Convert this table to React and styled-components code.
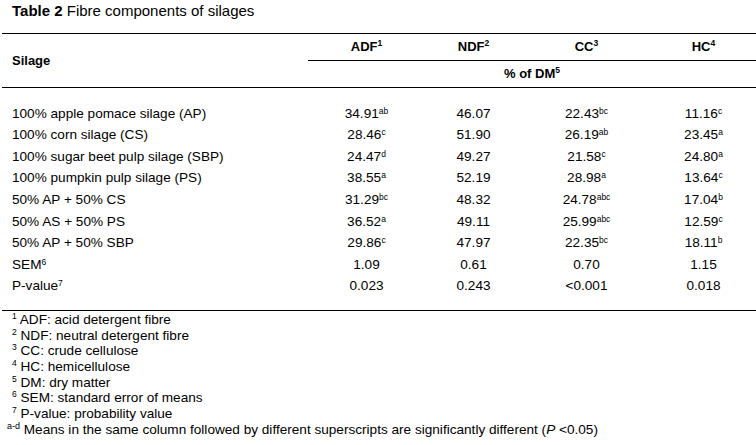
import React from "react";
import styled, { createGlobalStyle } from "styled-components";

const Global = createGlobalStyle`
  html, body { margin: 0; padding: 0; background: #fff; }
  body { font-family: "Liberation Sans", Arial, sans-serif; color: #000; }
`;

const COLS = "306px 117px 97px 129px 105px";

const Page = styled.div`
  width: 756px;
  height: 445px;
  overflow: hidden;
  background: #fff;
`;

const Title = styled.div`
  margin: 2px 0 0 0;
  padding-left: 12px;
  font-size: 15px;
  line-height: 17px;
  white-space: nowrap;
`;

const TableBox = styled.div`
  margin: 14px 0 0 2px;
  width: 754px;
  font-size: 13.6px;
`;

const Head = styled.div`
  display: grid;
  grid-template-columns: ${COLS};
  grid-template-rows: 28px 27px;
  font-weight: bold;
  font-size: 13px;
`;

const SilageHead = styled.div`
  grid-row: 1 / span 2;
  grid-column: 1;
  box-sizing: border-box;
  border-top: 1px solid #000;
  border-bottom: 1px solid #000;
  display: flex;
  align-items: center;
  padding-left: 10px;
`;

const ColHead = styled.div`
  box-sizing: border-box;
  border-top: 1px solid #000;
  border-bottom: 1px solid #000;
  display: flex;
  align-items: center;
  justify-content: center;
  white-space: nowrap;
`;

const UnitHead = styled.div`
  grid-column: 2 / span 4;
  box-sizing: border-box;
  border-bottom: 1px solid #000;
  display: flex;
  align-items: center;
  justify-content: center;
  white-space: nowrap;
`;

const HeadText = styled.span`
  display: inline-block;
  line-height: 16px;
`;

const Body = styled.div`
  padding: 14.6px 0 13px 0;
  border-bottom: 1px solid #000;
`;

const Row = styled.div`
  display: grid;
  grid-template-columns: ${COLS};
  height: 21.6px;
  line-height: 21.6px;
  align-items: center;
  white-space: nowrap;
`;

const Label = styled.div`
  padding-left: 10px;
`;

const Value = styled.div`
  text-align: center;
`;

const Sup = styled.span`
  font-size: ${(p) => p.$size || 8.5}px;
  line-height: 0;
  vertical-align: ${(p) => p.$raise || 4.5}px;
  font-weight: normal;
`;

const HeadSup = styled(Sup)`
  font-weight: bold;
`;

const Notes = styled.div`
  padding-top: 1px;
  font-size: 13.6px;
  line-height: 15.7px;
`;

const Note = styled.div`
  padding-left: ${(p) => (p.$indent != null ? p.$indent : 12)}px;
  white-space: nowrap;
`;

const rows = [
  ["100% apple pomace silage (AP)", null, ["34.91", "ab"], ["46.07"], ["22.43", "bc"], ["11.16", "c"]],
  ["100% corn silage (CS)", null, ["28.46", "c"], ["51.90"], ["26.19", "ab"], ["23.45", "a"]],
  ["100% sugar beet pulp silage (SBP)", null, ["24.47", "d"], ["49.27"], ["21.58", "c"], ["24.80", "a"]],
  ["100% pumpkin pulp silage (PS)", null, ["38.55", "a"], ["52.19"], ["28.98", "a"], ["13.64", "c"]],
  ["50% AP + 50% CS", null, ["31.29", "bc"], ["48.32"], ["24.78", "abc"], ["17.04", "b"]],
  ["50% AS + 50% PS", null, ["36.52", "a"], ["49.11"], ["25.99", "abc"], ["12.59", "c"]],
  ["50% AP + 50% SBP", null, ["29.86", "c"], ["47.97"], ["22.35", "bc"], ["18.11", "b"]],
  ["SEM", "6", ["1.09"], ["0.61"], ["0.70"], ["1.15"]],
  ["P-value", "7", ["0.023"], ["0.243"], ["<0.001"], ["0.018"]],
];

const notes = [
  ["1", "ADF: acid detergent fibre"],
  ["2", "NDF: neutral detergent fibre"],
  ["3", "CC: crude cellulose"],
  ["4", "HC: hemicellulose"],
  ["5", "DM: dry matter"],
  ["6", "SEM: standard error of means"],
  ["7", "P-value: probability value"],
];

const heads = [
  ["ADF", "1"],
  ["NDF", "2"],
  ["CC", "3"],
  ["HC", "4"],
];

export default function App() {
  return (
    <Page>
      <Global />
      <Title>
        <b>Table 2</b> Fibre components of silages
      </Title>
      <TableBox>
        <Head>
          <SilageHead>
            <HeadText>Silage</HeadText>
          </SilageHead>
          {heads.map(([h, s]) => (
            <ColHead key={h}>
              <HeadText>
                {h}
                <HeadSup $raise={5.5}>{s}</HeadSup>
              </HeadText>
            </ColHead>
          ))}
          <UnitHead>
            <HeadText>
              % of DM<HeadSup $raise={5.5}>5</HeadSup>
            </HeadText>
          </UnitHead>
        </Head>
        <Body>
          {rows.map(([label, lsup, ...vals]) => (
            <Row key={label}>
              <Label>
                {label}
                {lsup && <Sup>{lsup}</Sup>}
              </Label>
              {vals.map(([v, s], i) => (
                <Value key={i}>
                  {v}
                  {s && <Sup>{s}</Sup>}
                </Value>
              ))}
            </Row>
          ))}
        </Body>
      </TableBox>
      <Notes>
        {notes.map(([n, t]) => (
          <Note key={n}>
            <Sup $raise={5.5}>{n}</Sup> {t}
          </Note>
        ))}
        <Note $indent={7}>
          <Sup $raise={5.5} $size={9}>a-d</Sup> Means in the same column followed by different superscripts are
          significantly different (<i>P</i> &lt;0.05)
        </Note>
      </Notes>
    </Page>
  );
}
